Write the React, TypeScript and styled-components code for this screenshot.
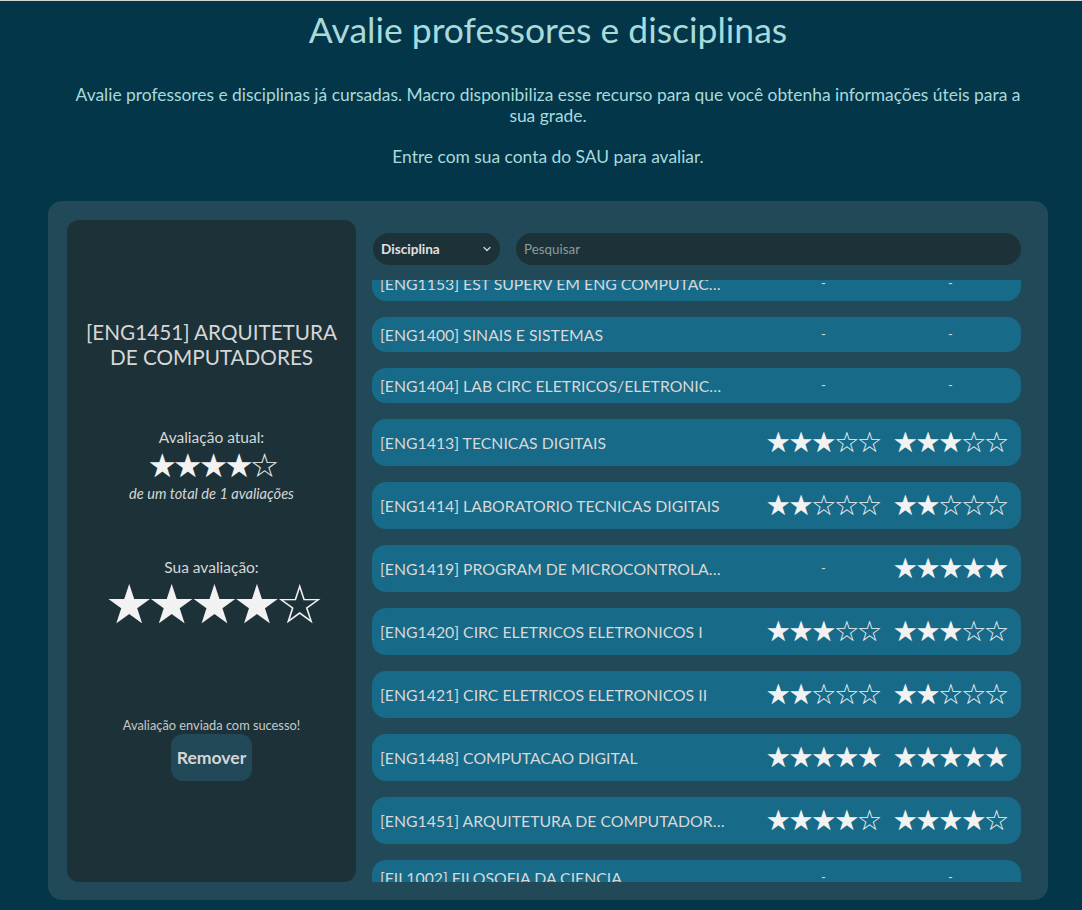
import React, { useEffect, useRef } from "react";
import styled, { createGlobalStyle } from "styled-components";

const GlobalStyle = createGlobalStyle`
  * { box-sizing: border-box; }
  html, body { margin: 0; padding: 0; background: #033648; }
  body { font-family: Lato, "Open Sans", sans-serif; border-top: 1px solid #d4d4d4; }
`;

const Page = styled.div`
  min-height: 909px;
  display: flex;
  flex-direction: column;
  align-items: center;
  padding: 0 34px 10px 48px;
`;

const Title = styled.h1`
  margin: 8px 0 0;
  font-size: 35.5px;
  font-weight: 400;
  line-height: 42px;
  color: #a8dadc;
  text-align: center;
`;

const Lead = styled.p`
  margin: 33px 0 0;
  max-width: 962px;
  font-size: 17.4px;
  line-height: 21px;
  color: #a8dadc;
  text-align: center;
`;

const Note = styled.p`
  margin: 20px 0 0;
  font-size: 17.4px;
  line-height: 21px;
  color: #a8dadc;
  text-align: center;
`;

const Panel = styled.section`
  margin-top: 34px;
  width: 1000px;
  height: 699px;
  background: #214958;
  border-radius: 14px;
  padding: 19px 27px 18px 19px;
  display: flex;
  gap: 16px;
`;

const Detail = styled.aside`
  width: 289px;
  flex-shrink: 0;
  background: #1c3238;
  border-radius: 12px;
  display: flex;
  flex-direction: column;
  align-items: center;
  padding: 100px 14px 0;
  color: #d6d6d6;
  text-align: center;
`;

const CourseName = styled.h2`
  margin: 0;
  font-size: 20.7px;
  font-weight: 400;
  line-height: 25px;
  color: #d6d6d6;
`;

const Label = styled.div<{ $top: number }>`
  margin-top: ${(p) => p.$top}px;
  font-size: 15.5px;
  line-height: 19px;
`;

const Stars = styled.div<{ $size: number; $lh: number; $gap: number }>`
  font-family: "DejaVu Sans", sans-serif;
  font-size: ${(p) => p.$size}px;
  line-height: ${(p) => p.$lh}px;
  letter-spacing: ${(p) => p.$gap}px;
  color: #f2f2f2;
  white-space: nowrap;
`;

const Total = styled.div`
  margin-top: 0;
  font-size: 14.6px;
  line-height: 17px;
  font-style: italic;
`;

const Success = styled.div`
  margin-top: 84px;
  font-size: 12.8px;
  line-height: 17px;
  color: #c8c8c8;
`;

const RemoveButton = styled.button`
  margin-top: 0;
  border: none;
  background: #214958;
  color: #d6d6d6;
  font-family: Lato, sans-serif;
  font-weight: 700;
  font-size: 17.6px;
  border-radius: 12px;
  padding: 0 4px;
  height: 47px;
  min-width: 81px;
`;

const Main = styled.div`
  flex: 1;
  min-width: 0;
  display: flex;
  flex-direction: column;
`;

const Toolbar = styled.div`
  display: flex;
  gap: 16px;
  margin-top: 13px;
  height: 32px;
  padding-left: 1px;
`;

const SelectBox = styled.div`
  width: 127px;
  height: 32px;
  border-radius: 16px;
  background: #1c3238;
  color: #e0e0e0;
  font-size: 13.6px;
  font-weight: 700;
  display: flex;
  align-items: center;
  padding: 0 8px;
  justify-content: space-between;
`;

const SearchBox = styled.div`
  flex: 1;
  height: 32px;
  border-radius: 16px;
  background: #1c3238;
  color: #8c9a9e;
  font-size: 13.4px;
  display: flex;
  align-items: center;
  padding: 0 8px;
`;

const List = styled.div`
  margin-top: 15px;
  flex: 1;
  overflow-y: auto;
  scrollbar-width: none;
  display: flex;
  flex-direction: column;
  gap: 16px;
  &::-webkit-scrollbar { display: none; }
`;

const Row = styled.div`
  flex-shrink: 0;
  display: flex;
  align-items: center;
  background: #176a88;
  border-radius: 14px;
  padding: 8px 8px;
  color: #d8d8d8;
`;

const Name = styled.div`
  flex: 1;
  min-width: 0;
  font-size: 15.8px;
  line-height: 19px;
  white-space: nowrap;
  overflow: hidden;
  text-overflow: ellipsis;
  padding-right: 30px;
`;

const Score = styled.div`
  width: 127px;
  flex-shrink: 0;
  font-size: 15px;
  line-height: 19px;
  display: flex;
  justify-content: center;
`;

const Dash = styled.span`
  font-size: 13px;
  padding-left: 2px;
`;

const starText = (n: number) => "★".repeat(n) + "☆".repeat(5 - n);

type Course = { name: string; a: number | null; b: number | null };

const courses: Course[] = [
  { name: "[ENG1153] EST SUPERV EM ENG COMPUTACAO I", a: null, b: null },
  { name: "[ENG1400] SINAIS E SISTEMAS", a: null, b: null },
  { name: "[ENG1404] LAB CIRC ELETRICOS/ELETRONICOS", a: null, b: null },
  { name: "[ENG1413] TECNICAS DIGITAIS", a: 3, b: 3 },
  { name: "[ENG1414] LABORATORIO TECNICAS DIGITAIS", a: 2, b: 2 },
  { name: "[ENG1419] PROGRAM DE MICROCONTROLADORES", a: null, b: 5 },
  { name: "[ENG1420] CIRC ELETRICOS ELETRONICOS I", a: 3, b: 3 },
  { name: "[ENG1421] CIRC ELETRICOS ELETRONICOS II", a: 2, b: 2 },
  { name: "[ENG1448] COMPUTACAO DIGITAL", a: 5, b: 5 },
  { name: "[ENG1451] ARQUITETURA DE COMPUTADORES", a: 4, b: 4 },
  { name: "[FIL1002] FILOSOFIA DA CIENCIA", a: null, b: null },
  { name: "[FIL1003] ETICA", a: null, b: null },
];

const Cell = ({ v }: { v: number | null }) => (
  <Score>
    {v === null ? (
      <Dash>-</Dash>
    ) : (
      <Stars $size={28.5} $lh={31} $gap={-2.7}>
        {starText(v)}
      </Stars>
    )}
  </Score>
);

const Chevron = () => (
  <svg width="10" height="10" viewBox="0 0 10 10" fill="none">
    <path d="M2 3.5 L5 6.5 L8 3.5" stroke="#d0d0d0" strokeWidth="1.4" strokeLinecap="round" strokeLinejoin="round" />
  </svg>
);

export default function App() {
  const listRef = useRef<HTMLDivElement>(null);
  useEffect(() => {
    if (listRef.current) listRef.current.scrollTop = 14;
  }, []);
  return (
    <>
      <GlobalStyle />
      <Page>
        <Title>Avalie professores e disciplinas</Title>
        <Lead>
          Avalie professores e disciplinas já cursadas. Macro disponibiliza esse recurso para que você obtenha
          informações úteis para a sua grade.
        </Lead>
        <Note>Entre com sua conta do SAU para avaliar.</Note>
        <Panel>
          <Detail>
            <CourseName>[ENG1451] ARQUITETURA DE COMPUTADORES</CourseName>
            <Label $top={58}>Avaliação atual:</Label>
            <Stars $size={33} $lh={38} $gap={-4}>
              {starText(4)}
            </Stars>
            <Total>de um total de 1 avaliações</Total>
            <Label $top={56}>Sua avaliação:</Label>
            <Stars $size={54} $lh={56} $gap={-5.8}>
              {starText(4)}
            </Stars>
            <Success>Avaliação enviada com sucesso!</Success>
            <RemoveButton>Remover</RemoveButton>
          </Detail>
          <Main>
            <Toolbar>
              <SelectBox>
                <span>Disciplina</span>
                <Chevron />
              </SelectBox>
              <SearchBox>Pesquisar</SearchBox>
            </Toolbar>
            <List ref={listRef}>
              {courses.map((c) => (
                <Row key={c.name}>
                  <Name>{c.name}</Name>
                  <Cell v={c.a} />
                  <Cell v={c.b} />
                </Row>
              ))}
            </List>
          </Main>
        </Panel>
      </Page>
    </>
  );
}
